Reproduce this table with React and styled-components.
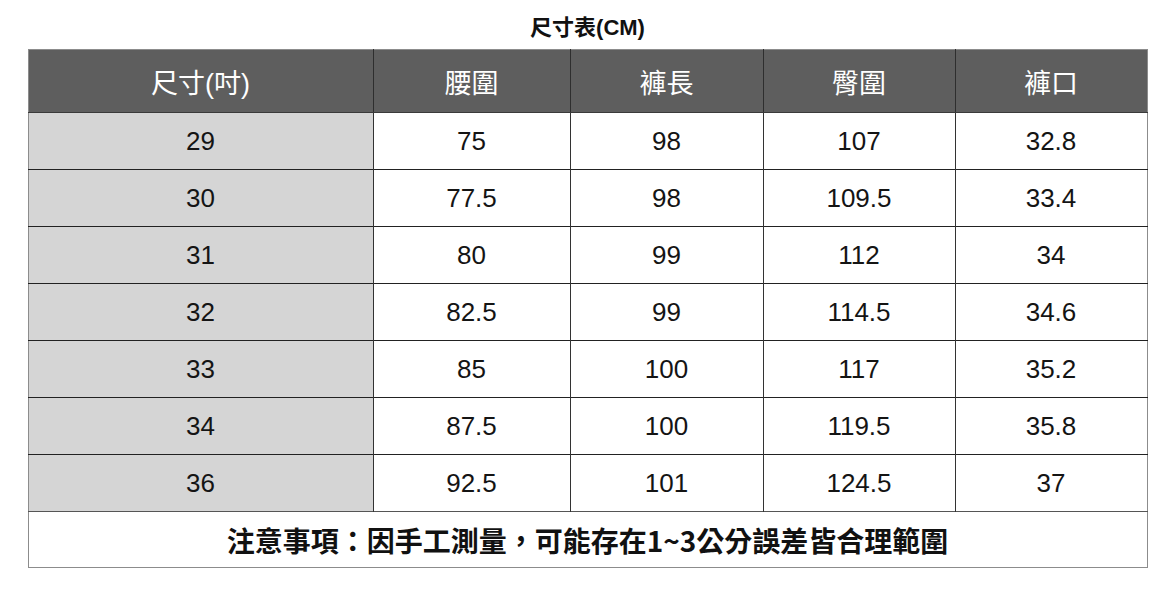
import React from 'react'
import styled, { createGlobalStyle } from 'styled-components'

const headers = ['尺寸(吋)', '腰圍', '褲長', '臀圍', '褲口']
const widths = [345, 197, 193, 192, 192]

const rows = [
    ['29', '75', '98', '107', '32.8'],
    ['30', '77.5', '98', '109.5', '33.4'],
    ['31', '80', '99', '112', '34'],
    ['32', '82.5', '99', '114.5', '34.6'],
    ['33', '85', '100', '117', '35.2'],
    ['34', '87.5', '100', '119.5', '35.8'],
    ['36', '92.5', '101', '124.5', '37'],
]

const App = () => {
    return (
        <Page>
            <GlobalStyle />
            <Title>尺寸表(CM)</Title>
            <Table>
                <colgroup>
                    {widths.map((w, i) => (
                        <col key={i} style={{ width: w }} />
                    ))}
                </colgroup>
                <thead>
                    <HeadRow>
                        {headers.map((h) => (
                            <HeadCell key={h}>{h}</HeadCell>
                        ))}
                    </HeadRow>
                </thead>
                <tbody>
                    {rows.map((row) => (
                        <BodyRow key={row[0]}>
                            {row.map((value, i) => (
                                <Cell key={i} $size={i === 0}>{value}</Cell>
                            ))}
                        </BodyRow>
                    ))}
                    <NoteRow>
                        <Note colSpan={5}>注意事項：因手工測量，可能存在1~3公分誤差皆合理範圍</Note>
                    </NoteRow>
                </tbody>
            </Table>
        </Page>
    )
}

const GlobalStyle = createGlobalStyle`
    html, body {
        margin: 0;
        padding: 0;
        background: #fff;
    }
    body {
        font-family: "Liberation Sans", "Noto Sans CJK TC", sans-serif;
    }
`

const Page = styled.div`
    width: 1175px;
    height: 600px;
    overflow: hidden;
`

const Title = styled.h1`
    margin: 0;
    box-sizing: border-box;
    height: 49px;
    padding-top: 14px;
    line-height: 28px;
    text-align: center;
    font-size: 22px;
    font-weight: 700;
    color: #111;
`

const Table = styled.table`
    width: 1119px;
    margin: 0 auto;
    border-collapse: collapse;
    table-layout: fixed;
    border: 1px solid #8c8c8c;
`

const HeadRow = styled.tr`
    height: 63px;
    background: #5e5e5e;
`

const HeadCell = styled.th`
    padding: 0;
    color: #fff;
    font-size: 27px;
    font-weight: 400;
    text-align: center;
    border-left: 1px solid #2e2e2e;
    border-bottom: 1px solid #3a3a3a;

    &:first-child {
        border-left: none;
    }
`

const BodyRow = styled.tr`
    height: 57px;
`

const Cell = styled.td`
    padding: 0;
    text-align: center;
    font-size: 26px;
    color: #141414;
    background: ${(p) => (p.$size ? '#d5d5d5' : '#fff')};
    border-left: 1px solid #333;
    border-top: 1px solid #222;

    &:first-child {
        border-left: none;
    }
`

const NoteRow = styled.tr`
    height: 56px;
`

const Note = styled.td`
    padding: 0;
    text-align: center;
    font-size: 28px;
    font-weight: 700;
    color: #111;
    font-family: "Noto Sans CJK TC", "Liberation Sans", sans-serif;
    border-top: 1px solid #555;
`

export default App
